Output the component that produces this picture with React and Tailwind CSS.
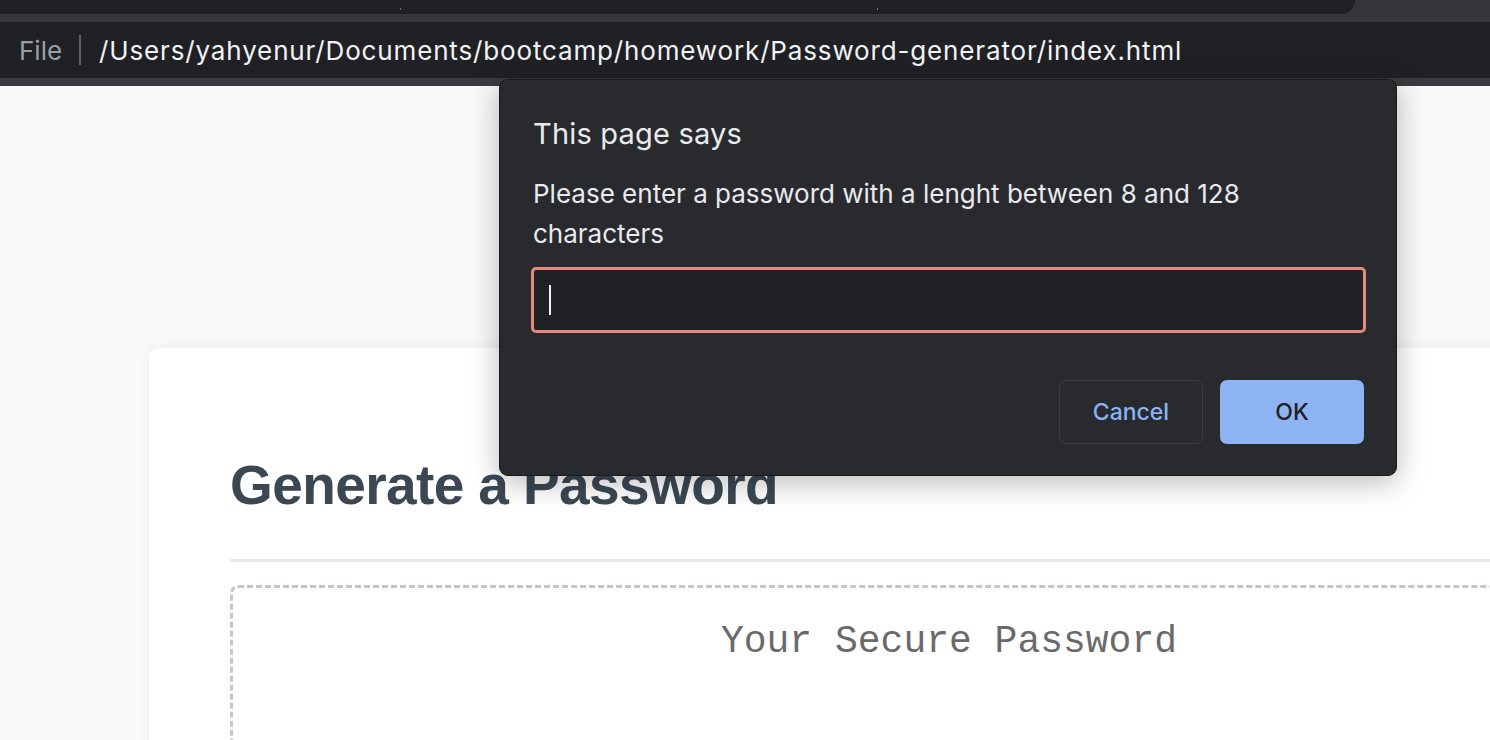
import React from 'react'

const URL_TEXT = '/Users/yahyenur/Documents/bootcamp/homework/Password-generator/index.html'

function BrowserChrome() {
  return (
    <div className="flex flex-col">
      {/* tab strip */}
      <div className="h-[14px] bg-[#35363a] flex">
        <div className="relative w-[1355px] h-full bg-[#202124] rounded-br-[14px]">
          <span className="absolute left-[400px] bottom-[4px] w-px h-[2px] bg-[#777]" />
          <span className="absolute left-[877px] bottom-[4px] w-px h-[2px] bg-[#777]" />
        </div>
      </div>
      <div className="h-[8px] bg-[#35363a]" />
      {/* address bar */}
      <div className="h-[56px] bg-[#202124] flex items-center pl-[19px] font-['Inter',sans-serif] text-[26px]">
        <span className="text-[#9aa0a6]">File</span>
        <span className="ml-[17px] mr-[18px] w-[2px] h-[30px] bg-[#5f6368]" />
        <span className="text-[#f1f3f4] tracking-[0.85px]">{URL_TEXT}</span>
      </div>
      <div className="h-[8px] bg-[#3a3b3e]" />
    </div>
  )
}

function Card() {
  return (
    <div className="ml-[149px] mt-[262px] w-[1600px] h-[600px] bg-white rounded-[10px] shadow-[0_0_14px_rgba(0,0,0,0.06)] pt-[104px] px-[81px]">
      <h2 className="font-['Liberation_Sans',Arial,sans-serif] font-bold text-[55px] leading-[66px] text-[#3b4854] tracking-[-0.6px]">
        Generate a Password
      </h2>
      <div className="mt-[41px] h-[3px] bg-[#e6e7e8]" />
      <div className="mt-[23px] h-[400px] border-[3px] border-dashed border-[#c0c7ce] rounded-[8px] pt-[32px] text-center">
        <span className="font-['Liberation_Mono','Courier_New',monospace] text-[38px] leading-[44px] text-[#6a6a6a]">
          Your Secure Password
        </span>
      </div>
    </div>
  )
}

function PromptDialog() {
  return (
    <div className="absolute left-[499px] top-[79px] w-[898px] h-[397px] bg-[#292a2d] rounded-[9px] border border-[#1a1a1c] shadow-[0_6px_30px_rgba(0,0,0,0.28)] font-['Inter',sans-serif] pl-[33px] pr-[32px] pt-[34px]">
      <p className="text-[29px] leading-[40px] text-[#e8eaed] tracking-[0.2px]">This page says</p>
      <p className="mt-[20px] text-[26px] leading-[40px] text-[#e8eaed] w-[760px]">
        Please enter a password with a lenght between 8 and 128 characters
      </p>
      <div className="mt-[13px] -mx-[2px] h-[66px] rounded-[5px] border-[3px] border-[#e8877f] bg-[#202124] flex items-center pl-[15px]">
        <span className="w-[2px] h-[30px] bg-[#f1f3f4]" />
      </div>
      <div className="mt-[47px] flex justify-end gap-[17px]">
        <button className="w-[144px] h-[64px] rounded-[7px] border border-[#3c3d41] text-[#8ab4f8] text-[23px] font-medium">
          Cancel
        </button>
        <button className="w-[144px] h-[64px] rounded-[7px] bg-[#8fb4f4] text-[#202124] text-[23px] font-medium">
          OK
        </button>
      </div>
    </div>
  )
}

export default function App() {
  return (
    <div className="relative w-[1490px] h-[740px] overflow-hidden bg-[#f8f9fa]">
      <BrowserChrome />
      <Card />
      <PromptDialog />
    </div>
  )
}
